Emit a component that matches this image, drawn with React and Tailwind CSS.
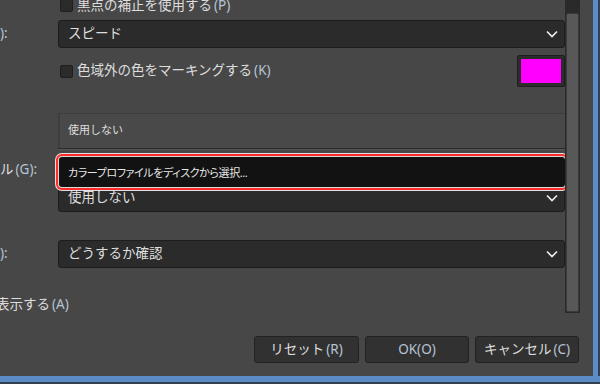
import React from 'react'

const font = { fontFamily: '"Noto Sans", "Noto Sans CJK JP", sans-serif' }

const Chevron = () => (
    <svg width="12" height="8" viewBox="0 0 12 8">
        <polyline points="1,1.5 6,6.5 11,1.5" fill="none" stroke="#ececec" strokeWidth="1.7" />
    </svg>
)

const Combo = ({ text }) => (
    <div className='h-[28px] w-full flex items-center justify-between rounded-[3px] border border-[#1d1d1d] bg-[#2b2b2b] pl-[9px] pr-[6px]'>
        <span>{text}</span>
        <Chevron />
    </div>
)

const Check = () => (
    <div className='w-[13px] h-[13px] shrink-0 rounded-[2px] border border-[#1f1f1f] bg-[#2b2b2b]' />
)

const Key = ({ k }) => <span className='ml-[2px] text-[#b6c4d4]'>({k})</span>

const Row = ({ label, children, className = '' }) => (
    <div className={`flex items-center ${className}`}>
        <div className='w-[58px] shrink-0 overflow-hidden whitespace-nowrap'>{label}</div>
        <div className='w-[507px] flex items-center'>{children}</div>
    </div>
)

const buttons = [
    { text: 'リセット', k: 'R', w: 'w-[105px]' },
    { text: 'OK', k: 'O', w: 'w-[104px]' },
    { text: 'キャンセル', k: 'C', w: 'w-[104px]' },
]

export default function App() {
    return (
        <div style={font} className='w-[600px] h-[384px] flex flex-col overflow-hidden text-[13.5px] leading-none text-[#dedede]'>
            <div className='h-[376px] flex'>
                <div className='w-[593px] bg-[#474747] flex flex-col'>
                    {/* scrolled area */}
                    <div className='h-[320px] flex'>
                        <div className='w-[565px] relative overflow-hidden'>
                            <div className='-mt-[8px] flex flex-col'>
                                <Row className='h-[27px]'>
                                    <div className='ml-[2px] flex items-center gap-[4px]'>
                                        <Check />
                                        <span>黒点の補正を使用する<Key k='P' /></span>
                                    </div>
                                </Row>
                                <Row className='h-[28px] mt-[1px]' label={<span className='text-[#b6c4d4]'>):</span>}>
                                    <Combo text='スピード' />
                                </Row>
                                <Row className='h-[32px] mt-[7px]'>
                                    <div className='ml-[2px] flex items-center gap-[4px]'>
                                        <Check />
                                        <span>色域外の色をマーキングする<Key k='K' /></span>
                                    </div>
                                    <div className='ml-auto w-[48px] h-[32px] rounded-[2px] border border-[#1e1e1e] bg-[#2c2c2c] p-[3px]'>
                                        <div className='w-full h-full bg-[#ff00ff]' />
                                    </div>
                                </Row>
                                <div className='h-[69px]' />
                                <Row className='h-[28px]' label={<span>ル<span className='ml-[2px] text-[#b6c4d4]'>(G):</span></span>}>
                                    <Combo text='' />
                                </Row>
                                <Row className='h-[28px]'>
                                    <Combo text='使用しない' />
                                </Row>
                                <Row className='h-[28px] mt-[28px]' label={<span className='text-[#b6c4d4]'>):</span>}>
                                    <Combo text='どうするか確認' />
                                </Row>
                                <div className='h-[28px] mt-[23px] flex items-center'>
                                    <span className='-ml-[4px]'>表示する<Key k='A' /></span>
                                </div>
                            </div>

                            {/* open combo menu */}
                            <div className='absolute left-[58px] top-[113px] w-[507px] flex flex-col text-[11px]'>
                                <div className='h-[35px] flex items-center pl-[8px] pb-[3px] border-l-2 border-t border-[#3e3e3e] bg-[#494949]'>
                                    使用しない
                                </div>
                                <div className='h-px bg-[#2a2a2a]' />
                                <div className='h-px bg-[#555555]' />
                                <div className='h-[7px]' />
                                <div
                                    style={{ fontFeatureSettings: '"palt"' }}
                                    className='ml-[1px] w-[506px] h-[30px] flex items-center pl-[9px] rounded-[3px] bg-[#121212] text-[#e6e6e6] tracking-[-0.4px] shadow-[0_0_0_1px_#d8d8d8,0_0_0_3px_#ff2a2a,0_0_0_4px_#e0e0e0]'
                                >
                                    カラープロファイルをディスクから選択...
                                </div>
                            </div>
                        </div>

                        {/* scrollbar */}
                        <div className='w-[15px] h-[313px] bg-[#2a2a2a] pt-[13px] pl-[1px]'>
                            <div className='w-[13px] h-[299px] rounded-[2px] border border-[#3b3b3b] bg-[#585858]' />
                        </div>
                    </div>

                    {/* dialog buttons */}
                    <div className='flex justify-end gap-[6px] pt-[16px] pr-[14px]'>
                        {buttons.map((b, key) => (
                            <div key={key} className={`${b.w} h-[27px] flex items-center justify-center rounded-[3px] border border-[#222222] bg-[#313131]`}>
                                {b.text === 'OK' ? <span className='text-[#b6c4d4]'>OK(O)</span> : <span>{b.text}<Key k={b.k} /></span>}
                            </div>
                        ))}
                    </div>
                </div>
                <div className='w-[5px] bg-[#5b8cc6]' />
                <div className='w-[2px] bg-[#34404e]' />
            </div>
            <div className='h-[6px] bg-[#5b8cc6]' />
            <div className='h-[2px] bg-[#34404e]' />
        </div>
    )
}
